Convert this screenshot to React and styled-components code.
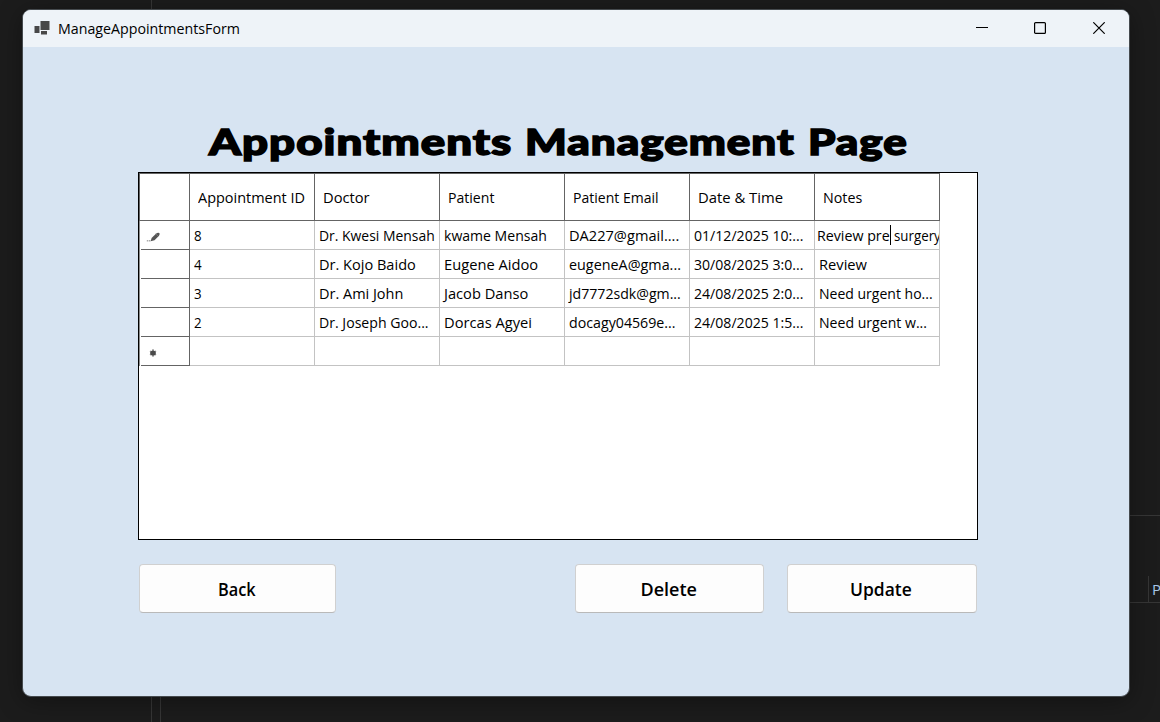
import React, { useLayoutEffect, useRef } from "react";
import styled, { createGlobalStyle } from "styled-components";

const Global = createGlobalStyle`
  * { box-sizing: border-box; }
  body { margin: 0; background: #1e1e1e; overflow: hidden; }
`;

const Desktop = styled.div`
  position: relative;
  width: 1160px;
  height: 722px;
  overflow: hidden;
  background: #1c1c1c;
  color: #000;
  font-family: "Open Sans", "Noto Sans", sans-serif;
  font-size: 15px;
`;

const Guide = styled.div`
  position: absolute;
  left: ${(p) => p.$x}px;
  top: ${(p) => p.$y}px;
  width: ${(p) => p.$w || 1}px;
  height: ${(p) => p.$h || 1}px;
  background: #363636;
`;

const HiddenLabel = styled.span`
  position: absolute;
  left: 1152px;
  top: 579px;
  line-height: 20px;
  color: #a8c8e8;
`;

const Window = styled.main`
  position: absolute;
  left: 22px;
  top: 9px;
  width: 1108px;
  height: 688px;
  display: flex;
  flex-direction: column;
  overflow: hidden;
  border: 1px solid #454a4e;
  border-radius: 9px;
  background: #d7e4f2;
  box-shadow: 0 4px 24px rgba(0, 0, 0, 0.35);
`;

const TitleBar = styled.header`
  flex: none;
  height: 37px;
  display: flex;
  align-items: center;
  padding: 0 0 2px 11px;
  background: #eef3f8;
`;

const Caption = styled.div`
  flex: 1;
  padding: 0 0 0 7px;
  line-height: 20px;
`;

const CaptionButton = styled.button`
  width: ${(p) => p.$w || 58}px;
  height: 35px;
  display: flex;
  align-items: center;
  justify-content: center;
  padding: 0;
  border: 0;
  background: none;
`;

const Form = styled.section`
  width: 840px;
  margin-left: 115px;
  padding-top: 70px;
  display: flex;
  flex-direction: column;
`;

const Heading = styled.h1`
  margin: 0;
  height: 55px;
  padding-left: 71px;
  display: flex;
  gap: 13px;
  font: 900 36px/48px Lato, sans-serif;
  letter-spacing: 0.8px;
  -webkit-text-stroke: 1.5px #000;
`;

const GridPanel = styled.div`
  height: 368px;
  border: 1px solid #000;
  background: #fff;
`;

const Row = styled.div`
  display: grid;
  grid-template-columns: 51px repeat(6, 125px);
  height: ${(p) => (p.$head ? 48 : 29)}px;
  width: 801px;
  border-top: ${(p) => (p.$head ? "1px solid #646464" : "0")};
`;

const HeadCell = styled.div`
  display: flex;
  align-items: center;
  padding: 0 0 0 8px;
  border-right: 1px solid #646464;
  border-bottom: 1px solid #646464;
  &:first-child { border-left: 1px solid #646464; }
`;

const Marker = styled.div`
  display: flex;
  align-items: center;
  border-left: 1px solid #8a8a8a;
  border-right: 1px solid #646464;
  padding: 3px 0 0 6px;
  background: linear-gradient(#646464, #646464) 1px 100% / 100% 1px no-repeat;
`;

const Cell = styled.div`
  display: flex;
  align-items: center;
  overflow: hidden;
  padding: 0 0 1px ${(p) => (p.$editing ? 2 : 4)}px;
  border-right: 1px solid #c3c3c3;
  border-bottom: 1px solid #c3c3c3;
`;

const Caret = styled.i`
  flex: none;
  width: 1px;
  height: 20px;
  background: #000;
  margin: 0 3px 0 0;
`;

const Actions = styled.div`
  display: flex;
  padding: 24px 1px 0 1px;
`;

const Action = styled.button`
  width: ${(p) => p.$w}px;
  height: 49px;
  margin-left: ${(p) => p.$gap || 0}px;
  padding: 0 2px 0 0;
  display: flex;
  align-items: center;
  justify-content: center;
  border: 1px solid #d0d0d0;
  border-bottom-color: #b9b9b9;
  border-radius: 4px;
  background: #fdfdfd;
  color: #000;
  font: 600 18px/24px "Open Sans", "Noto Sans", sans-serif;
`;

const FitBox = styled.span`
  display: block;
  flex: none;
  width: ${(p) => p.$w}px;
  white-space: pre;
`;

const FitInner = styled.span`
  display: inline-block;
  transform-origin: 0 50%;
`;

// Condenses or widens a label so that it fills the given width.
function Fit({ w, children }) {
  const ref = useRef(null);
  useLayoutEffect(() => {
    const el = ref.current;
    el.style.transform = `scaleX(${w / el.offsetWidth})`;
  }, [w, children]);
  return (
    <FitBox $w={w}>
      <FitInner ref={ref}>{children}</FitInner>
    </FitBox>
  );
}

const columns = [
  ["Appointment ID", 107],
  ["Doctor", 47],
  ["Patient", 46],
  ["Patient Email", 86],
  ["Date & Time", 85],
  ["Notes", 39],
];

const rows = [
  [["8", 8], ["Dr. Kwesi Mensah", 116], ["kwame Mensah", 103], ["DA227@gmail....", 110], ["01/12/2025 10:...", 109], null],
  [["4", 8], ["Dr. Kojo Baido", 97], ["Eugene Aidoo", 94], ["eugeneA@gma...", 112], ["30/08/2025 3:0...", 109], ["Review", 48]],
  [["3", 8], ["Dr. Ami John", 84], ["Jacob Danso", 84], ["jd7772sdk@gm...", 112], ["24/08/2025 2:0...", 109], ["Need urgent ho...", 114]],
  [["2", 8], ["Dr. Joseph Goo...", 110], ["Dorcas Agyei", 88], ["docagy04569e...", 107], ["24/08/2025 1:5...", 109], ["Need urgent w...", 108]],
];

const FormIcon = () => (
  <svg width="17" height="16" viewBox="0 0 17 16">
    <path fill="#484848" d="M6.500 1h9v9h-9zM.5 6h5v7h-5zM7 11h6v3.500h-6z" />
  </svg>
);

const PencilIcon = () => (
  <svg width="15" height="12" viewBox="0 0 15 12">
    <path d="M4.600 10.200 5.600 7 10.200 2.500Q12 1 13.400 2.100 14 3.300 13 4.700L8.500 9.200Z" fill="#555" />
    <path d="M9.800 2.700 12.300 5.200" stroke="#888" strokeWidth=".6" />
    <path d="M.8 9.700h1.400M2.800 9.700h1.600" stroke="#aaa" strokeWidth="1.500" />
  </svg>
);

const NewRowIcon = () => (
  <svg width="13" height="10" viewBox="0 0 13 10">
    <path d="M7 1.200v7.600M4 3l6 4M4 7l6-4M4 5h6" stroke="#888" strokeWidth="1.500" />
    <circle cx="7" cy="5" r="2.600" fill="#4a4a4a" />
  </svg>
);

export default function App() {
  return (
    <Desktop>
      <Global />
      <Guide $x={151} $y={0} $h={722} />
      <Guide $x={160} $y={690} $h={32} />
      <Guide $x={1120} $y={515} $w={40} />
      <Guide $x={1120} $y={602} $w={40} />
      <Guide $x={1148} $y={576} $h={26} />
      <HiddenLabel>P</HiddenLabel>
      <Window>
        <TitleBar>
          <FormIcon />
          <Caption><Fit w={182}>ManageAppointmentsForm</Fit></Caption>
          <CaptionButton aria-label="Minimize">
            <svg width="12" height="12"><path d="M0 5.500h12" stroke="#000" /></svg>
          </CaptionButton>
          <CaptionButton aria-label="Maximize">
            <svg width="12" height="12"><rect x=".6" y=".6" width="10.800" height="10.800" rx="1" fill="none" stroke="#000" strokeWidth="1.200" /></svg>
          </CaptionButton>
          <CaptionButton $w={60} aria-label="Close">
            <svg width="12" height="12"><path d="M.3.3l11.400 11.400M11.700.3L.3 11.700" stroke="#000" strokeWidth="1.200" /></svg>
          </CaptionButton>
        </TitleBar>
        <Form>
          <Heading>
            <Fit w={303}>Appointments</Fit>{" "}
            <Fit w={270}>Management</Fit>{" "}
            <Fit w={100}>Page</Fit>
          </Heading>
          <GridPanel>
            <Row $head>
              <HeadCell />
              {columns.map(([label, w]) => (
                <HeadCell key={label}><Fit w={w}>{label}</Fit></HeadCell>
              ))}
            </Row>
            {rows.map((cells, r) => (
              <Row key={r}>
                <Marker>{r === 0 && <PencilIcon />}</Marker>
                {cells.map((cell, c) =>
                  cell ? (
                    <Cell key={c}><Fit w={cell[1]}>{cell[0]}</Fit></Cell>
                  ) : (
                    <Cell key={c} $editing>
                      <Fit w={73}>Review pre</Fit>
                      <Caret />
                      <Fit w={47}>surgery</Fit>
                    </Cell>
                  )
                )}
              </Row>
            ))}
            <Row>
              <Marker><NewRowIcon /></Marker>
              {columns.map(([label]) => <Cell key={label} />)}
            </Row>
          </GridPanel>
          <Actions>
            <Action $w={197}><Fit w={38}>Back</Fit></Action>
            <Action $w={189} $gap={239}><Fit w={56}>Delete</Fit></Action>
            <Action $w={190} $gap={23}><Fit w={62}>Update</Fit></Action>
          </Actions>
        </Form>
      </Window>
    </Desktop>
  );
}
